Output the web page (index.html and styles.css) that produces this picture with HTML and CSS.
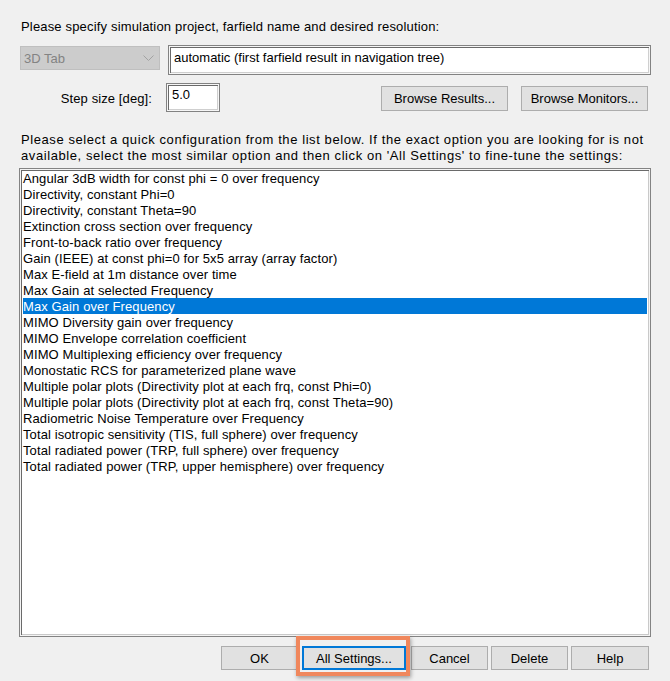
FILE: index.html
```html
<!DOCTYPE html>
<html lang="en">
<head>
  <meta charset="UTF-8" />
  <title>Farfield Quick Configuration</title>
  <link rel="stylesheet" href="styles.css">
</head>
<body>
  <div class="dialog">
    <p class="prompt">Please specify simulation project, farfield name and desired resolution:</p>

    <div class="row top-row">
      <div class="combo">
        <span>3D Tab</span>
        <svg class="chevron" width="11" height="6" viewBox="0 0 11 6">
          <polyline points="0.5,0.5 5.5,5.5 10.5,0.5" fill="none" stroke="#a2a2a2" stroke-width="1"/>
        </svg>
      </div>
      <div class="field wide">automatic (first farfield result in navigation tree)</div>
    </div>

    <div class="row step-row">
      <label class="step-label">Step size [deg]:</label>
      <div class="field step">5.0</div>
      <div class="spacer"></div>
      <button class="btn browse">Browse Results...</button>
      <button class="btn browse">Browse Monitors...</button>
    </div>

    <p class="hint">Please select a quick configuration from the list below. If the exact option you are looking for is not<br>available, select the most similar option and then click on 'All Settings' to fine-tune the settings:</p>

    <ul class="listbox">
      <li>Angular 3dB width for const phi = 0 over frequency</li>
      <li>Directivity, constant Phi=0</li>
      <li>Directivity, constant Theta=90</li>
      <li>Extinction cross section over frequency</li>
      <li>Front-to-back ratio over frequency</li>
      <li>Gain (IEEE) at const phi=0 for 5x5 array (array factor)</li>
      <li>Max E-field at 1m distance over time</li>
      <li>Max Gain at selected Frequency</li>
      <li class="selected">Max Gain over Frequency</li>
      <li>MIMO Diversity gain over frequency</li>
      <li>MIMO Envelope correlation coefficient</li>
      <li>MIMO Multiplexing efficiency over frequency</li>
      <li>Monostatic RCS for parameterized plane wave</li>
      <li>Multiple polar plots (Directivity plot at each frq, const Phi=0)</li>
      <li>Multiple polar plots (Directivity plot at each frq, const Theta=90)</li>
      <li>Radiometric Noise Temperature over Frequency</li>
      <li>Total isotropic sensitivity (TIS, full sphere) over frequency</li>
      <li>Total radiated power (TRP, full sphere) over frequency</li>
      <li>Total radiated power (TRP, upper hemisphere) over frequency</li>
    </ul>

    <div class="actions">
      <button class="btn ok">OK</button>
      <div class="focus-wrap">
        <button class="btn all default">All Settings...</button>
        <span class="callout"></span>
      </div>
      <button class="btn cancel">Cancel</button>
      <button class="btn delete">Delete</button>
      <button class="btn help">Help</button>
    </div>
  </div>
</body>
</html>
```

FILE: styles.css
```css
* {
  box-sizing: border-box;
}
body {
  margin: 0;
  background: #f0f0f0;
  color: #000;
  font-family: 'Liberation Sans', Arial, sans-serif;
  font-size: 13px;
}
.dialog {
  width: 670px;
  height: 681px;
  padding: 19px 19px 0 20px;
  overflow: hidden;
}
p {
  margin: 0;
  line-height: 16px;
}
.prompt {
  padding-left: 1px;
  letter-spacing: 0.17px;
}
.row {
  display: flex;
  align-items: flex-start;
}
.top-row {
  margin-top: 10px;
  gap: 8px;
}
.combo {
  width: 140px;
  height: 24px;
  margin-top: 1px;
  background: #cccccc;
  border: 1px solid #bfbfbf;
  color: #838383;
  display: flex;
  align-items: center;
  justify-content: space-between;
  padding: 0 5px 0 3px;
}
.chevron {
  display: block;
}
.field {
  background: #fff;
  border: 1px solid #828282;
  box-shadow: inset 0 0 0 1px #f6f6f6, inset 2px 2px 0 #6a6a6a, inset -2px -2px 0 #cfcfcf;
  padding: 5px 5px 0 5px;
  line-height: 14px;
}
.wide {
  flex: 1;
  height: 30px;
}
.step-row {
  margin-top: 8px;
}
.step-label {
  width: 132px;
  text-align: right;
  margin-top: 9px;
  line-height: 14px;
  margin-right: 14px;
  letter-spacing: 0.1px;
}
.step {
  width: 54px;
  height: 29px;
  padding-top: 4px;
}
.spacer {
  flex: 1;
}
.btn {
  font: inherit;
  color: #000;
  background: #e1e1e1;
  border: 1px solid #adadad;
  height: 25px;
  padding: 0;
  margin: 0;
}
.browse {
  width: 127px;
  margin-top: 3px;
}
.browse + .browse {
  margin-left: 13px;
  margin-right: 3px;
}
.hint {
  margin-top: 20px;
  padding-left: 1px;
  letter-spacing: 0.58px;
}
.listbox {
  list-style: none;
  margin: 4px 0 0 -1px;
  padding: 1px 3px;
  height: 469px;
  background: #fff;
  border: 1px solid #838383;
  box-shadow: inset 0 0 0 1px #f4f4f4, inset 2px 2px 0 #6a6a6a, inset -2px -2px 0 #c9c9c9;
}
.listbox li {
  line-height: 16px;
  height: 16px;
  white-space: nowrap;
  letter-spacing: 0.1px;
  padding-top: 1px;
}
.listbox .selected {
  background: #0078d7;
  color: #fff;
}
.actions {
  display: flex;
  justify-content: flex-end;
  gap: 3px;
  margin-top: 9px;
  padding-right: 2px;
}
.actions .btn {
  height: 24px;
}
.ok {
  width: 77px;
}
.focus-wrap {
  position: relative;
  margin-left: 1px;
  margin-right: 2px;
}
.all {
  width: 104px;
}
.default {
  border: 2px solid #0078d7;
}
.cancel, .delete {
  width: 77px;
}
.help {
  width: 78px;
}
.callout {
  position: absolute;
  left: -6px;
  right: -4px;
  top: -10px;
  bottom: -6px;
  border: 4px solid #f0875c;
  box-shadow: 1px 2px 4px rgba(0, 0, 0, 0.35);
  pointer-events: none;
}
```
